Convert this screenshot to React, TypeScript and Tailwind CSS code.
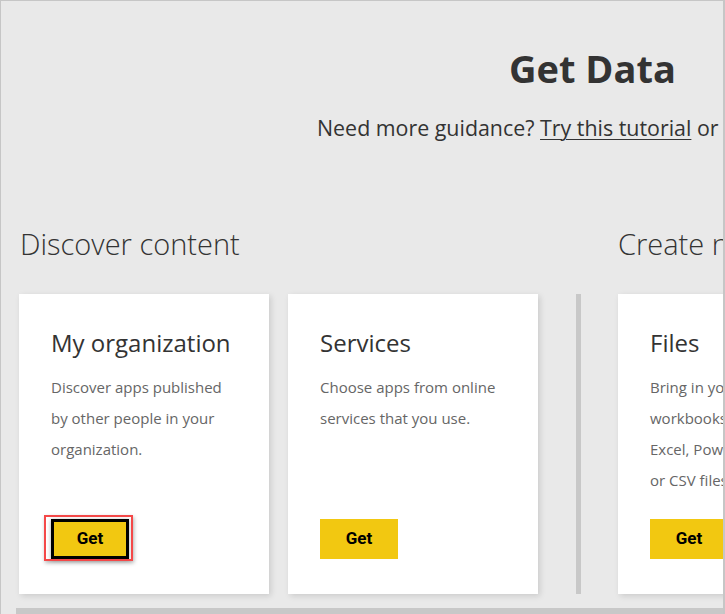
import React from "react";

function GetButton({ highlighted = false }: { highlighted?: boolean }) {
  if (highlighted) {
    return (
      <div className="relative self-start">
        <div className="w-[78px] h-[40px] bg-[#f2c811] border-[3px] border-black shadow-[0_1px_4px_rgba(0,0,0,0.35)] flex items-center justify-center font-['Roboto',sans-serif] font-bold text-[17px] text-black">
          Get
        </div>
        <div className="absolute -left-[7px] -top-[4px] w-[89px] h-[46px] border-2 border-[#f44848] shadow-[1px_2px_4px_rgba(0,0,0,0.3)] pointer-events-none" />
      </div>
    );
  }
  return (
    <div className="self-start w-[78px] h-[40px] bg-[#f2c811] flex items-center justify-center font-['Roboto',sans-serif] font-bold text-[17px] text-black">
      Get
    </div>
  );
}

function Card({
  title,
  lines,
  highlighted = false,
}: {
  title: string;
  lines: string[];
  highlighted?: boolean;
}) {
  return (
    <div className="w-[250px] h-[300px] shrink-0 bg-white shadow-[2px_2px_6px_rgba(0,0,0,0.13)] flex flex-col pl-8 pt-[33px] pb-[35px]">
      <h3 className="text-[24px] leading-[32px] text-[#333] whitespace-nowrap">{title}</h3>
      <div className="mt-[13px] text-[15px] leading-[31px] text-[#666]">
        {lines.map((l) => (
          <div key={l} className="whitespace-nowrap">
            {l}
          </div>
        ))}
      </div>
      <div className="mt-auto flex">
        <GetButton highlighted={highlighted} />
      </div>
    </div>
  );
}

export default function App() {
  return (
    <div className="w-[725px] h-[614px] overflow-hidden bg-[#e9e9e9] border-t border-l border-r-2 border-[#c6c6c6] font-['Open_Sans','Noto_Sans',sans-serif] text-[#333]">
      <h1 className="pt-[43px] pl-[508px] text-[38px] leading-[48px] font-bold whitespace-nowrap">
        Get Data
      </h1>
      <p className="mt-[22px] pl-[316px] text-[21.4px] leading-[28px] whitespace-nowrap">
        Need more guidance? <span className="underline underline-offset-[3px] decoration-1">Try this tutorial</span> or{" "}
        <span className="underline underline-offset-[3px] decoration-1">you can watch a video</span>
      </p>

      <div className="flex mt-[82px] pl-[18px]">
        <section className="shrink-0">
          <h2 className="pl-[1px] text-[29px] leading-[40px] font-light whitespace-nowrap">
            Discover content
          </h2>
          <div className="flex gap-[19px] mt-[30px]">
            <Card
              title="My organization"
              lines={["Discover apps published", "by other people in your", "organization."]}
              highlighted
            />
            <Card title="Services" lines={["Choose apps from online", "services that you use."]} />
          </div>
        </section>

        <div className="shrink-0 self-end ml-[38px] w-[5px] h-[300px] bg-[#c8c8c8]" />

        <section className="shrink-0 ml-[37px]">
          <h2 className="text-[29px] leading-[40px] font-light whitespace-nowrap">
            Create new content
          </h2>
          <div className="flex gap-[19px] mt-[30px]">
            <Card
              title="Files"
              lines={["Bring in your reports,", "workbooks, or data from", "Excel, Power BI Desktop,", "or CSV files."]}
            />
            <Card title="Databases" lines={["Connect to live data in", "Azure SQL Database and", "more."]} />
          </div>
        </section>
      </div>

      <div className="mt-[14px] ml-[15px] h-[6px] bg-[#c8c8c8]" />
    </div>
  );
}
